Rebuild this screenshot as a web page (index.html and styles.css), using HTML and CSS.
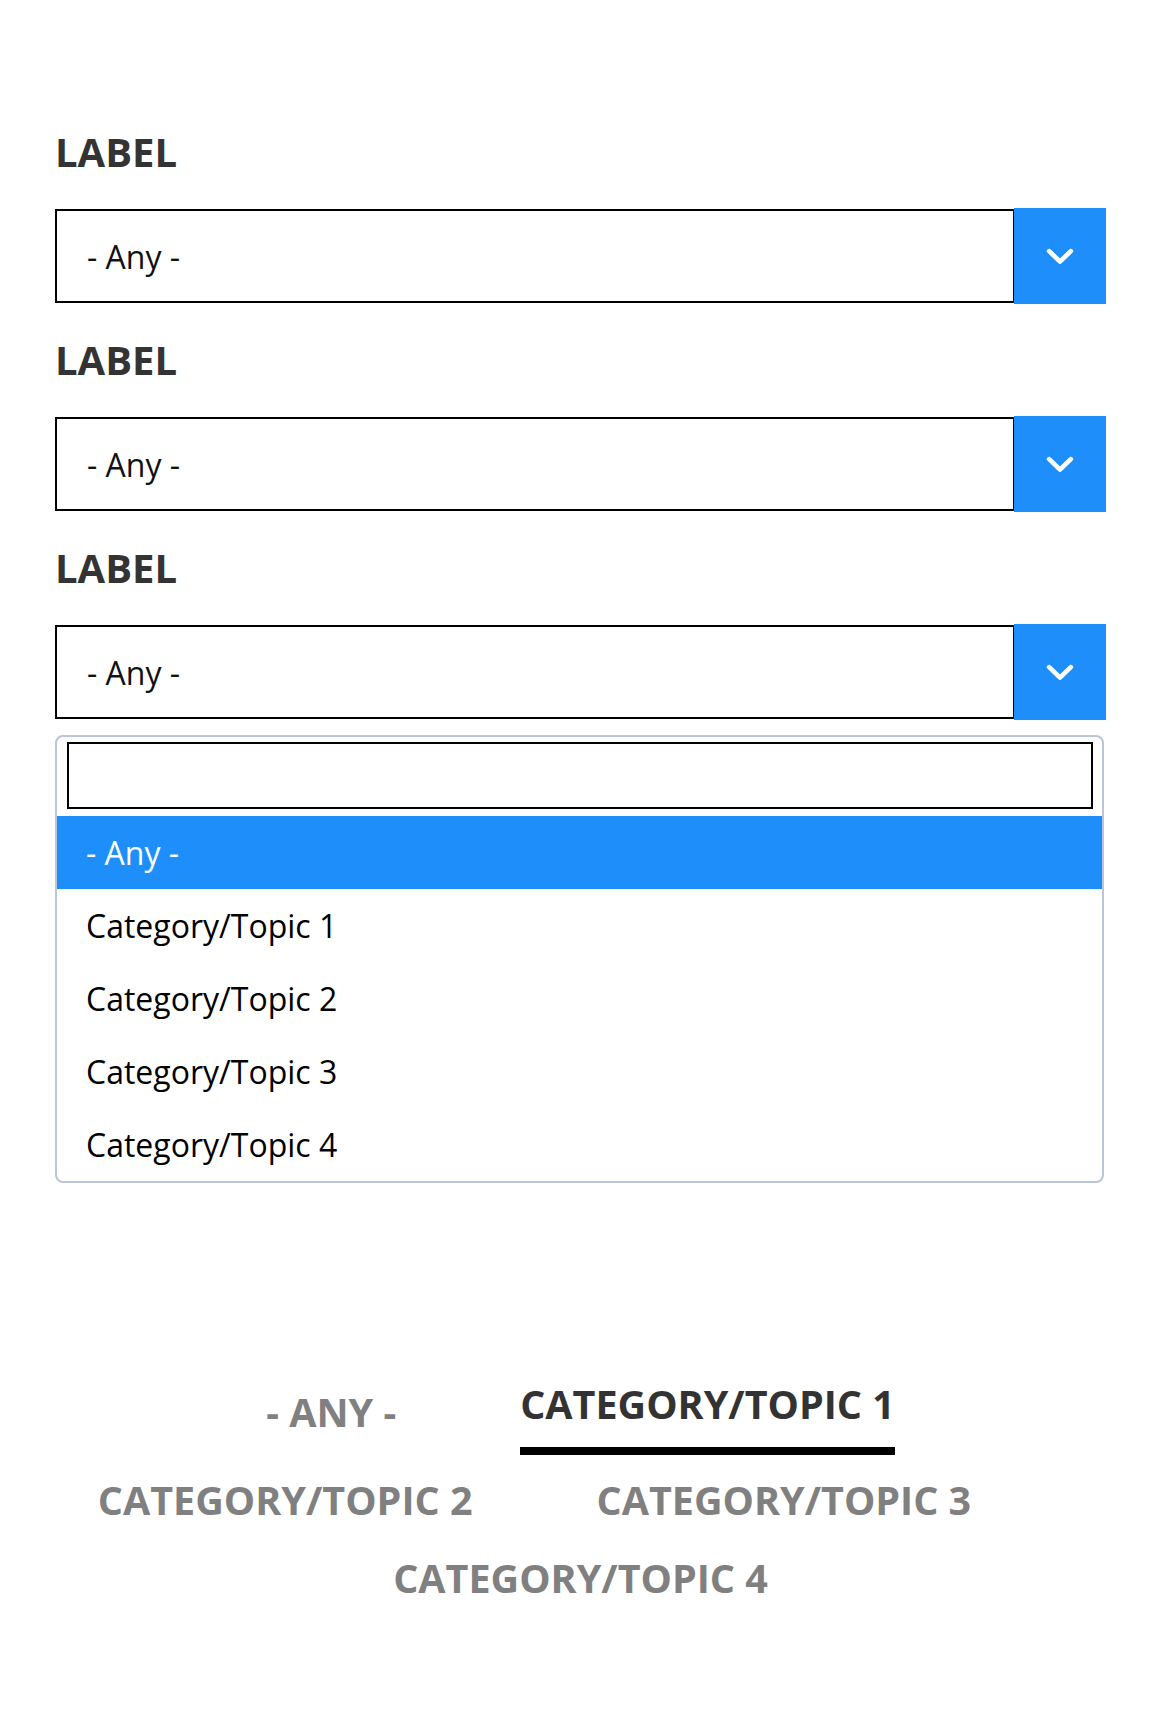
FILE: index.html
```html
<!DOCTYPE html>
<html lang="en">
<head>
<meta charset="utf-8">
<title>Filters</title>
<link rel="stylesheet" href="styles.css">
</head>
<body>
<main class="page">
  <div class="field">
    <label class="field-label">LABEL</label>
    <div class="select">
      <span class="select-value">- Any -</span>
      <span class="select-arrow">
        <svg class="chevron" viewBox="0 0 28 18" width="28" height="18" aria-hidden="true"><path d="M3.2 3.2 L14 13.6 L24.8 3.2" fill="none" stroke="#fff" stroke-width="4.6" stroke-linecap="round" stroke-linejoin="round"/></svg>
      </span>
    </div>
  </div>
  <div class="field">
    <label class="field-label">LABEL</label>
    <div class="select">
      <span class="select-value">- Any -</span>
      <span class="select-arrow">
        <svg class="chevron" viewBox="0 0 28 18" width="28" height="18" aria-hidden="true"><path d="M3.2 3.2 L14 13.6 L24.8 3.2" fill="none" stroke="#fff" stroke-width="4.6" stroke-linecap="round" stroke-linejoin="round"/></svg>
      </span>
    </div>
  </div>
  <div class="field">
    <label class="field-label">LABEL</label>
    <div class="select">
      <span class="select-value">- Any -</span>
      <span class="select-arrow">
        <svg class="chevron" viewBox="0 0 28 18" width="28" height="18" aria-hidden="true"><path d="M3.2 3.2 L14 13.6 L24.8 3.2" fill="none" stroke="#fff" stroke-width="4.6" stroke-linecap="round" stroke-linejoin="round"/></svg>
      </span>
    </div>
    <div class="dropdown">
      <div class="dropdown-search"><input class="search-input" type="text" aria-label="Search"></div>
      <ul class="options">
        <li class="option is-highlighted">- Any -</li>
        <li class="option">Category/Topic 1</li>
        <li class="option">Category/Topic 2</li>
        <li class="option">Category/Topic 3</li>
        <li class="option">Category/Topic 4</li>
      </ul>
    </div>
  </div>

  <nav class="tabs">
    <a class="tab tab-top">- ANY -</a>
    <a class="tab tab-top is-active">CATEGORY/TOPIC 1</a>
    <a class="tab">CATEGORY/TOPIC 2</a>
    <a class="tab tab-shift">CATEGORY/TOPIC 3</a>
    <a class="tab">CATEGORY/TOPIC 4</a>
  </nav>
</main>
</body>
</html>
```

FILE: styles.css
```css
* { box-sizing: border-box; }

html, body {
  margin: 0;
  padding: 0;
  background: #fff;
}

body {
  font-family: "Open Sans", "Noto Sans", sans-serif;
  color: #000;
}

.page {
  width: 1160px;
  padding: 125px 54px 0 55px;
}

.field + .field {
  margin-top: 29px;
}

.field-label {
  display: block;
  font-size: 40px;
  font-weight: 700;
  line-height: 54px;
  color: #333;
  margin-bottom: 29px;
}

.select {
  display: flex;
  align-items: center;
  height: 96px;
}

.select-value {
  flex: 1;
  height: 94px;
  display: flex;
  align-items: center;
  border: 2px solid #000;
  border-right-width: 1px;
  padding-left: 30px;
  font-size: 32px;
  color: #111;
}

.select-arrow {
  width: 92px;
  height: 96px;
  background: #1e8ffa;
  display: flex;
  align-items: center;
  justify-content: center;
}

.chevron {
  display: block;
  margin-top: 1px;
}

.dropdown {
  margin-top: 15px;
  margin-right: 2px;
  border: 2px solid #b9c5d9;
  border-radius: 8px;
  overflow: hidden;
}

.dropdown-search {
  padding: 5px 9px 7px 10px;
}

.search-input {
  display: block;
  width: 100%;
  height: 67px;
  border: 2px solid #000;
  border-radius: 0;
  background: #fff;
  margin: 0;
  outline: none;
}

.options {
  list-style: none;
  margin: 0;
  padding: 0;
}

.option {
  height: 73px;
  padding: 12px 0 12px 29px;
  font-size: 32px;
  line-height: 49px;
  color: #000;
}

.option.is-highlighted {
  background: #1e8ffa;
  color: #fff;
}

.tabs {
  margin-top: 194px;
  display: flex;
  flex-wrap: wrap;
  justify-content: center;
  align-items: flex-end;
  column-gap: 124px;
  row-gap: 8px;
}

.tab {
  display: block;
  font-size: 39.5px;
  font-weight: 700;
  line-height: 54px;
  padding-bottom: 16px;
  color: #808080;
  white-space: nowrap;
  text-decoration: none;
}

.tab-top {
  margin-bottom: 10px;
}

.tab-shift {
  margin-right: 92px;
}

.tab.is-active {
  color: #333;
  border-bottom: 8px solid #000;
}
```
